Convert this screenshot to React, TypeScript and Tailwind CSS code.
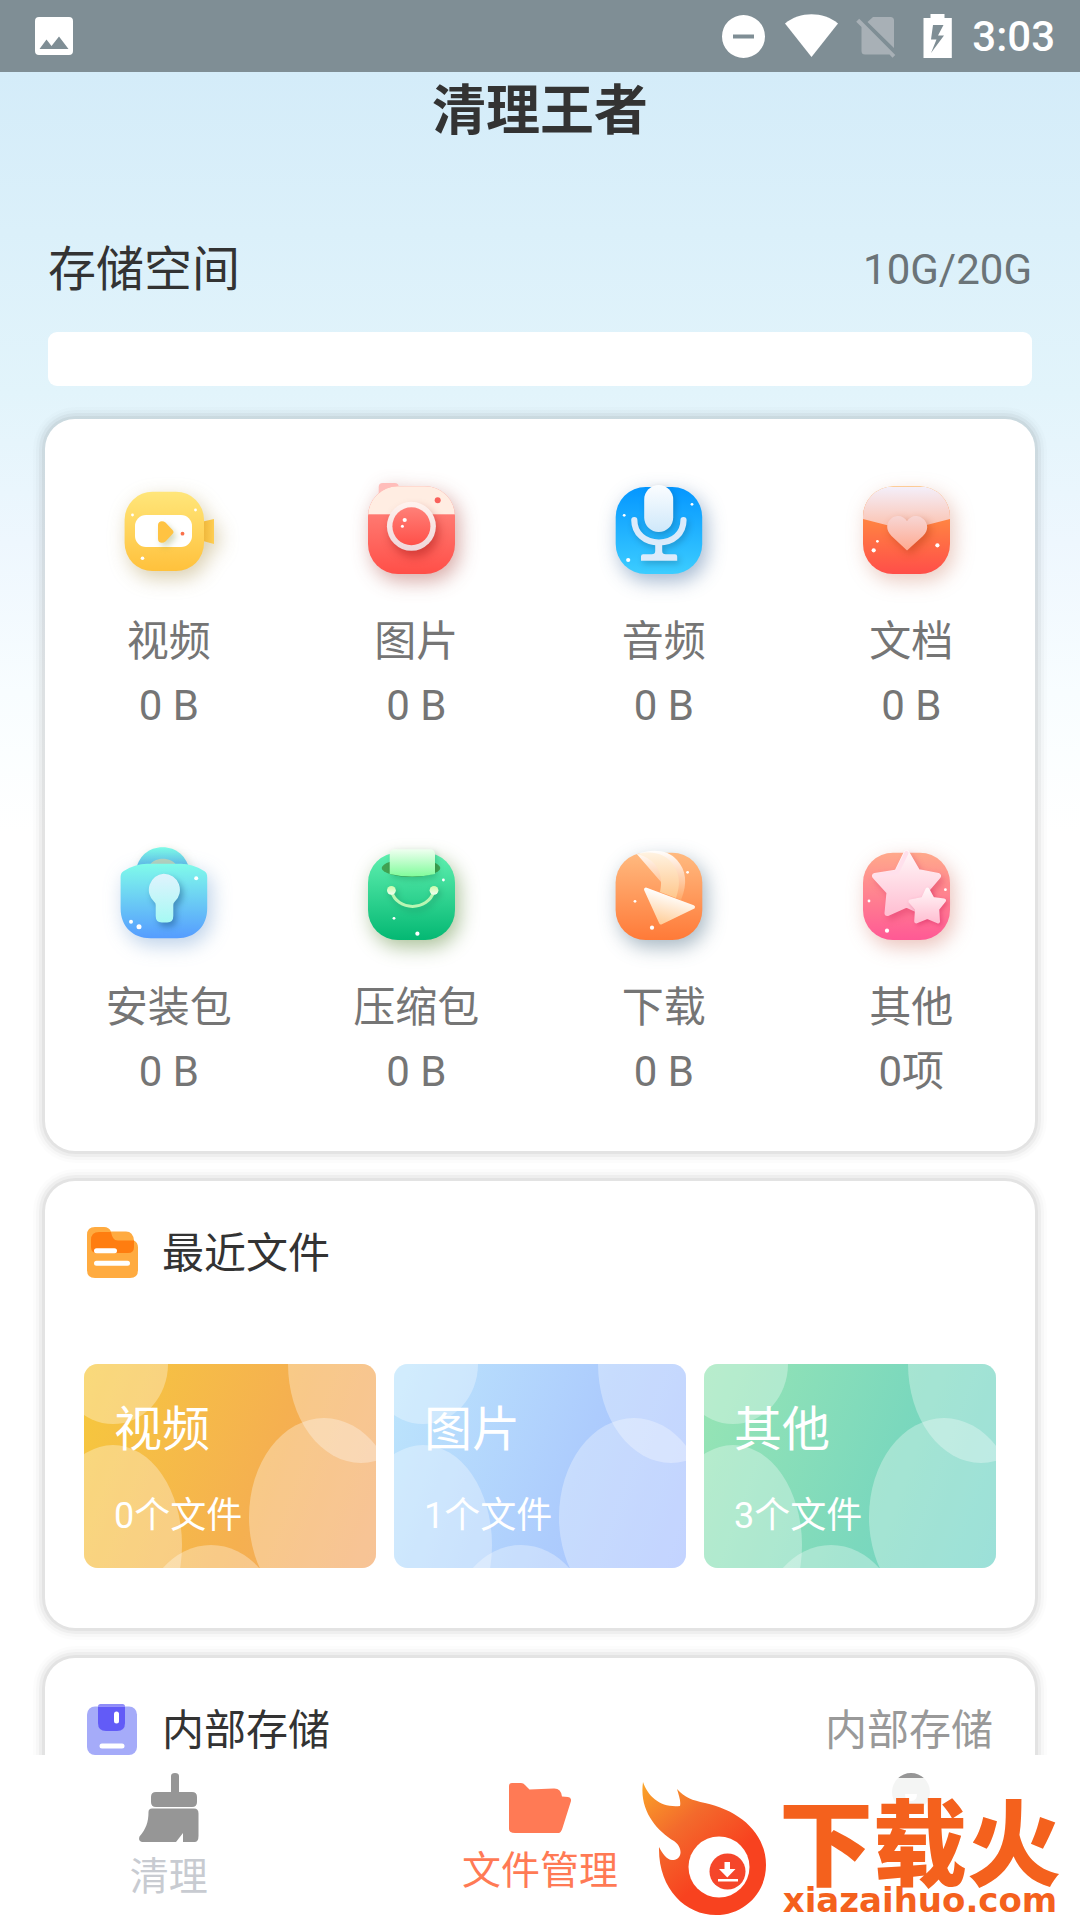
import type { ReactNode } from "react";

function Gradient({ id, from, to }: { id: string; from: string; to: string }) {
  return (
    <linearGradient id={id} x1="0" y1="0" x2="0" y2="1">
      <stop offset="0" stopColor={from} />
      <stop offset="1" stopColor={to} />
    </linearGradient>
  );
}

// small white sparkles scattered on every icon: [x, y, radius]
function Dots({ points }: { points: number[][] }) {
  return (
    <g fill="#fff">
      {points.map(([x, y, r]) => (
        <circle key={`${x}-${y}`} cx={x} cy={y} r={r} />
      ))}
    </g>
  );
}

const inner = "drop-shadow-[2px_3px_3px_rgba(0,0,0,0.18)]";

function VideoIcon() {
  return (
    <svg viewBox="0 0 120 120" className="size-[120px] overflow-visible" aria-hidden="true">
      <defs>
        <Gradient id="v-body" from="#ffe67a" to="#ffc13c" />
        <linearGradient id="v-side" x1="0" x2="1">
          <stop offset="0" stopColor="#eeb63b" />
          <stop offset="1" stopColor="#ffce52" />
        </linearGradient>
      </defs>
      <g className="drop-shadow-[4px_7px_10px_rgba(150,120,30,0.36)]">
        <path d="M94 51.5 105 49v25L94 71z" fill="url(#v-side)" />
        <rect x="15.6" y="21.7" width="79.4" height="79.4" rx="28" fill="url(#v-body)" />
      </g>
      <rect x="26" y="45" width="57" height="32" rx="11" fill="#fff" />
      <path
        className="drop-shadow-[3px_4px_3px_rgba(110,130,40,0.3)]"
        d="M49 55c0-4 4.5-5 7.5-2.5l7 7.5c1.3 1.4 1.3 2.6 0 4l-7 7.5c-3 2.5-7.5 1.5-7.5-2.5z"
        fill="#ffc342"
      />
      <circle cx="73.5" cy="63.7" r="1.9" fill="#f9704a" />
      <Dots points={[[23.5, 45, 1.4], [86.5, 40, 1.4], [33.5, 88.3, 1.8]]} />
    </svg>
  );
}

function CameraIcon() {
  return (
    <svg viewBox="0 0 120 120" className="size-[120px] overflow-visible" aria-hidden="true">
      <defs>
        <Gradient id="c-body" from="#ff8d84" to="#ff4f48" />
        <Gradient id="c-lens" from="#ff8078" to="#ff5049" />
        <Gradient id="c-ring" from="#fff3ee" to="#efd6da" />
        <clipPath id="c-clip">
          <rect x="12" y="16.3" width="87" height="87.7" rx="30" />
        </clipPath>
      </defs>
      <g className="drop-shadow-[4px_7px_10px_rgba(160,50,40,0.42)]">
        <path d="M22.7 30V17q0-4 4-4h12q4 0 4 4v10z" fill="#ffbdba" />
        <g clipPath="url(#c-clip)">
          <rect x="12" y="16" width="87" height="88" fill="url(#c-body)" />
          <rect x="12" y="16" width="87" height="28.3" fill="#ffede2" />
        </g>
      </g>
      <circle className="drop-shadow-[3px_6px_5px_rgba(150,10,10,0.4)]" cx="55.4" cy="56.3" r="24.5" fill="url(#c-ring)" />
      <circle cx="55.4" cy="56.3" r="19" fill="url(#c-lens)" />
      <circle cx="81.7" cy="30.3" r="3" fill="#f9605a" />
      <Dots points={[[48.7, 50, 2.1], [46.4, 56.3, 1.5]]} />
    </svg>
  );
}

function MicIcon() {
  return (
    <svg viewBox="0 0 120 120" className="size-[120px] overflow-visible" aria-hidden="true">
      <defs>
        <Gradient id="m-body" from="#0496ff" to="#3ccdff" />
        <Gradient id="m-cap" from="#fbfdff" to="#cfe8fa" />
      </defs>
      <rect className="drop-shadow-[4px_7px_10px_rgba(30,80,140,0.42)]" x="11.7" y="17" width="86.5" height="87" rx="30" fill="url(#m-body)" />
      <g className={inner} fill="#dcebfb">
        <path d="M30.300 50c0 13.500 10.500 22.500 24.700 22.500S79.500 63.500 79.500 50" fill="none" stroke="#dcebfb" strokeWidth="6.2" strokeLinecap="round" />
        <path d="M51.200 73h7v8q0 3.200 3.500 3.200h9.300q2.200 0 2.200 2.200v4.300H37v-4.300q0-2.200 2.200-2.200h8.500q3.500 0 3.500-3.200z" />
      </g>
      <rect className={inner} x="40.2" y="15" width="29" height="47" rx="14.5" fill="url(#m-cap)" />
      <Dots points={[[20.2, 45.3, 1.4], [88, 34.3, 1.4], [24.2, 90, 2.1]]} />
    </svg>
  );
}

function DocIcon() {
  return (
    <svg viewBox="0 0 120 120" className="size-[120px] overflow-visible" aria-hidden="true">
      <defs>
        <Gradient id="d-body" from="#ffa53e" to="#ff4e49" />
        <Gradient id="d-flap" from="#f4effa" to="#fcc0ac" />
        <Gradient id="d-heart" from="#f7d6d4" to="#ffa990" />
        <clipPath id="d-clip">
          <rect x="12" y="16.5" width="87" height="87.5" rx="30" />
        </clipPath>
      </defs>
      <g className="drop-shadow-[4px_7px_10px_rgba(190,90,60,0.32)]">
        <g clipPath="url(#d-clip)">
          <rect x="12" y="16" width="87" height="88" fill="url(#d-body)" />
          <path d="M12 17h87v32L62 58.500q-6.500 1.800-13 0L12 49z" fill="url(#d-flap)" />
        </g>
      </g>
      <path
        className="drop-shadow-[3px_4px_4px_rgba(170,50,10,0.4)]"
        d="M56 80.500 40.500 66C31 56.500 39 46 47 46c4 0 7 2 9 5.200C58 48 61 46 65 46c8 0 16.500 10.500 7 20z"
        fill="url(#d-heart)"
      />
      <Dots points={[[22.7, 80.3, 2.1], [26.4, 71.3, 1.4], [86.4, 75.3, 2.1]]} />
    </svg>
  );
}

function LockIcon() {
  return (
    <svg viewBox="0 0 120 120" className="size-[120px] overflow-visible" aria-hidden="true">
      <defs>
        <Gradient id="l-body" from="#80fbea" to="#559cff" />
        <Gradient id="l-top" from="#7cfbe6" to="#58a6ea" />
        <Gradient id="l-key" from="#e0f3fd" to="#a6f9f4" />
      </defs>
      <path className="drop-shadow-[2px_3px_5px_rgba(90,110,60,0.25)]" d="M26.500 36C29 20 40 11.300 53.600 11.300S78 20 81 36z" fill="url(#l-top)" />
      <path d="M40 30c3-5 8-7.300 13.800-7.300S65 25 68 30z" fill="#b7d3bd" />
      <path
        className="drop-shadow-[4px_7px_10px_rgba(60,120,190,0.34)]"
        d="M11.600 41q0-4 2.800-5.800Q26 27.700 38 27.700h34q12 0 23.500 7.500 2.700 1.800 2.700 5.800v31.300c0 18-12 30-30 30H41.600c-18 0-30-12-30-30z"
        fill="url(#l-body)"
      />
      <path
        className="drop-shadow-[3px_4px_3px_rgba(10,60,110,0.4)]"
        d="M54.700 37.700a16.200 16.200 0 0 1 10.800 28.300q-1.200 1.200-1.200 3V80q0 6.500-6 6.500h-5.600q-6 0-6-6.500V69q0-1.800-1.400-3a16.200 16.200 0 0 1 9.400-28.300z"
        fill="url(#l-key)"
      />
      <Dots points={[[87.2, 42.3, 2], [22, 85.7, 2], [30, 90.7, 2.5]]} />
    </svg>
  );
}

function BagIcon() {
  return (
    <svg viewBox="0 0 120 120" className="size-[120px] overflow-visible" aria-hidden="true">
      <defs>
        <Gradient id="b-body" from="#60f0b0" to="#04b873" />
        <Gradient id="b-paper" from="#effff0" to="#80fc9b" />
        <Gradient id="b-knob" from="#c8fba9" to="#f1fff0" />
      </defs>
      <rect className="drop-shadow-[4px_7px_10px_rgba(70,120,30,0.46)]" x="12" y="16.7" width="87" height="87.3" rx="30" fill="url(#b-body)" />
      <ellipse cx="55" cy="32" rx="29.3" ry="8.8" fill="#41a352" />
      <path className="drop-shadow-[2px_3px_3px_rgba(0,90,40,0.25)]" d="M33.700 18q0-4.700 5-4.700H74q5 0 5 4.700v20Q56 43 33.700 38z" fill="url(#b-paper)" />
      <g className={inner}>
        <path d="M35.400 55C41 75.500 72 75.500 78 55" fill="none" stroke="#b9f6b3" strokeWidth="3" />
        <circle cx="35.4" cy="54.3" r="4.4" fill="url(#b-knob)" />
        <circle cx="78" cy="54.3" r="4.4" fill="url(#b-knob)" />
      </g>
      <Dots points={[[87.4, 44, 1.4], [38, 82.3, 1.4], [61.4, 97.7, 2.1]]} />
    </svg>
  );
}

function DownloadIcon() {
  return (
    <svg viewBox="0 0 120 120" className="size-[120px] overflow-visible" aria-hidden="true">
      <defs>
        <Gradient id="dl-body" from="#ffba80" to="#ff7a38" />
        <Gradient id="dl-swoosh" from="#fff3e2" to="#ffc78c" />
        <Gradient id="dl-edge" from="#ffffff" to="#ffa968" />
        <linearGradient id="dl-arrow" x1="0.6" y1="0.15" x2="0.3" y2="1">
          <stop offset="0" stopColor="#fff" />
          <stop offset="1" stopColor="#ffcf9c" />
        </linearGradient>
      </defs>
      <rect className="drop-shadow-[4px_7px_10px_rgba(40,80,110,0.42)]" x="11.6" y="16.7" width="86.7" height="87.3" rx="30" fill="url(#dl-body)" />
      <path d="M33 18.300C48 12 65 14 73 24c9 10 11 23 4 40L70 61z" fill="url(#dl-edge)" />
      <path d="M33 18.300C46 14 61 17 68 27c9 12 8 23 4 35l-16-6c4-16-2-33-23-37.700z" fill="url(#dl-swoosh)" />
      <path
        d="m42 53.500 47 17.500-32 15.500z"
        fill="url(#dl-arrow)"
        stroke="url(#dl-arrow)"
        strokeWidth="4"
        strokeLinejoin="round"
      />
      <Dots points={[[31, 65.3, 1.4], [83.6, 36.3, 1.4], [48, 91.7, 2.1]]} />
    </svg>
  );
}

function StarIcon() {
  return (
    <svg viewBox="0 0 120 120" className="size-[120px] overflow-visible" aria-hidden="true">
      <defs>
        <Gradient id="s-body" from="#ffa98b" to="#ff5995" />
        <Gradient id="s-star" from="#fff5f7" to="#ffc0d3" />
      </defs>
      <rect className="drop-shadow-[4px_7px_10px_rgba(200,90,70,0.36)]" x="12" y="16.7" width="87" height="87.3" rx="30" fill="url(#s-body)" />
      <path
        className="drop-shadow-[3px_4px_3px_rgba(200,20,80,0.3)]"
        d="M55.500 17 46 36.500 24 40l14.500 16L36.500 77l19-8.500L74 77l1.500-23.500L87 40l-20.500-4z"
        fill="url(#s-star)"
        stroke="url(#s-star)"
        strokeWidth="6"
        strokeLinejoin="round"
      />
      <path d="M55.500 17 46 36.500 24 40" fill="none" stroke="#ffe0ec" strokeWidth="4" strokeLinecap="round" />
      <path
        className="drop-shadow-[2px_2px_2px_rgba(200,20,80,0.35)]"
        d="m76.400 53.500-4.400 9.500-12.500 2.500 6.500 7.500-.8 12.500 11.200-4.500 10.600 4.500-.8-12.500 6.800-8.500-11.400-1.500z"
        fill="url(#s-star)"
        stroke="url(#s-star)"
        strokeWidth="4"
        strokeLinejoin="round"
      />
      <Dots points={[[18, 65, 1.4], [94.4, 53.7, 1.4], [36, 94.7, 2.1]]} />
    </svg>
  );
}

const categories: { name: string; size: string; icon: ReactNode }[] = [
  { name: "视频", size: "0 B", icon: <VideoIcon /> },
  { name: "图片", size: "0 B", icon: <CameraIcon /> },
  { name: "音频", size: "0 B", icon: <MicIcon /> },
  { name: "文档", size: "0 B", icon: <DocIcon /> },
  { name: "安装包", size: "0 B", icon: <LockIcon /> },
  { name: "压缩包", size: "0 B", icon: <BagIcon /> },
  { name: "下载", size: "0 B", icon: <DownloadIcon /> },
  { name: "其他", size: "0项", icon: <StarIcon /> },
];

const recentFiles = [
  { name: "视频", count: "0个文件", bg: "bg-linear-110 from-[#f6c83c] via-[#f5b050] via-60% to-[#f4a766]" },
  { name: "图片", count: "1个文件", bg: "bg-linear-110 from-[#bce5fc] via-[#adccfd] via-60% to-[#a7bfff]" },
  { name: "其他", count: "3个文件", bg: "bg-linear-110 from-[#97e5b4] via-[#7bd8bd] via-60% to-[#6dd2c7]" },
];

const card =
  "rounded-[30px] bg-white shadow-[0_0_0_3px_rgba(0,0,0,0.045),0_0_0_6px_rgba(0,0,0,0.035),0_0_0_9px_rgba(0,0,0,0.02),0_0_0_12px_rgba(0,0,0,0.01)]";

function StatusBar() {
  return (
    <header className="flex h-[72px] shrink-0 items-center justify-between bg-[#7f8e95] pr-[25px] pl-[35px] text-white">
      <svg viewBox="0 0 38 38" className="size-[38px]" aria-hidden="true">
        <path fillRule="evenodd" fill="#fff" d="M4 0h30q4 0 4 4v30q0 4-4 4H4q-4 0-4-4V4q0-4 4-4zm.500 32h29L24 19.500l-7.500 9.500-5-6.500z" />
      </svg>
      <div className="flex items-center">
        <svg viewBox="0 0 240 48" className="h-12 w-[240px]" aria-hidden="true">
          <path fillRule="evenodd" fill="#fff" d="M21.500 3a21.500 21.500 0 1 0 0 43 21.500 21.500 0 0 0 0-43zM11 22.500h21v4H11z" />
          <path fill="#fff" d="M63 11.500C78-.700 101-.700 116 11.500L89.500 45z" />
          <path fill="#a8b0b6" d="M151 5h17.500q3.500 0 3.500 3.500V36l-26.500-26zM140 9.500l-2.800-2.800-3 3 5.300 5.300v24q0 3.500 3.500 3.500h24.500l3 3.200 2.800-2.800z" />
          <path fillRule="evenodd" fill="#fff" d="M208.500 2h14v4h7.300v40h-28.300V6h7zM211 13l-2 14.500h5.500L209 41l13-17.500h-6L221.500 13z" />
        </svg>
        <span className="pt-[2px] pl-[10px] text-[42px] leading-[70px] font-medium">3:03</span>
      </div>
    </header>
  );
}

function RecentTile({ name, count, bg }: (typeof recentFiles)[number]) {
  return (
    <button type="button" className={`relative flex h-[204px] flex-1 flex-col overflow-hidden rounded-[14px] px-[30px] pt-[34px] text-left text-white ${bg}`}>
      <svg viewBox="0 0 292 204" preserveAspectRatio="none" className="absolute inset-0 size-full" fill="#fff" fillOpacity="0.32" aria-hidden="true">
        <ellipse cx="29" cy="0" rx="55" ry="60" />
        <ellipse cx="29" cy="181" rx="69" ry="100" />
        <ellipse cx="127" cy="262" rx="69" ry="81" />
        <ellipse cx="240" cy="153" rx="75" ry="99" />
        <ellipse cx="277" cy="0" rx="73" ry="99" />
      </svg>
      <span className="relative text-[48px] leading-[64px]">{name}</span>
      <span className="relative pt-[22px] text-[36px] leading-[64px]">{count}</span>
    </button>
  );
}

function TabBar() {
  return (
    <nav className="grid h-[165px] shrink-0 grid-cols-[1fr_1.2fr_1fr] bg-white pt-[18px] text-[39px] leading-[60px]">
      <button type="button" className="flex flex-col items-center text-[#c8cbd1]">
        <svg viewBox="0 0 60 70" className="h-[70px] w-[60px]" fill="#969696" aria-hidden="true">
          <path d="M32 3q0-3 4-3t4 3v16h13q5 0 5 5v5q0 5-5 5H17q-5 0-5-5v-5q0-5 5-5h15z" />
          <path d="M13 35.500h42q4.500 0 4.500 5V63q0 6-4 6H44V60l-7 9H3q-4-1-2.500-5.500C7 56 9.500 49 9.500 39q0-3.500 3.500-3.500z" />
        </svg>
        <span className="pt-1">清理</span>
      </button>
      <button type="button" className="flex flex-col items-center pt-[10px] text-[#ff7a55]">
        <svg viewBox="0 0 62 50" className="h-[50px] w-[62px]" fill="#ff7a55" aria-hidden="true">
          <path d="M3 0h9q2.500 0 4 2l4.500 4.500 24-1Q52 5 53 13.500l6 .500q3.500.500 3 4L53.500 45q-1.500 5-4 5H6q-6 0-6-4V3q0-3 3-3z" />
        </svg>
        <span className="pt-2">文件管理</span>
      </button>
      <button type="button" className="flex flex-col items-center">
        <svg viewBox="0 0 60 70" className="h-[70px] w-[60px]" fill="#969696" aria-hidden="true">
          <path fillRule="evenodd" d="M30 0a19 19 0 1 1 0 38 19 19 0 0 1 0-38zM24 21q0 7 6 7t6-7z" />
        </svg>
      </button>
    </nav>
  );
}

function Watermark() {
  return (
    <div className="absolute right-0 bottom-0 flex h-[142px] w-[442px] bg-white/90 text-[#f4611d]">
      <svg viewBox="0 0 150 150" className="-mt-2 size-[150px] shrink-0" aria-hidden="true">
        <defs>
          <linearGradient id="w-flame" x1="0" y1="0" x2="0.55" y2="0.7">
            <stop offset="0" stopColor="#fba528" />
            <stop offset="0.5" stopColor="#f36a2c" />
            <stop offset="1" stopColor="#f8421f" />
          </linearGradient>
        </defs>
        <path
          d="M5 12c5 15 18 26 37 24 1-5-1-10-3-17 8 9 15 11 28 14 33 7 61 29 61 62 0 29-23 50-50 50-31 0-58-27-57-68 3 6 8 13 13 13 11 0 11-13 2-19C18 60 1 40 5 12z"
          fill="url(#w-flame)"
        />
        <circle cx="81" cy="97" r="30.5" fill="#fff" />
        <circle cx="89.5" cy="101.5" r="18" fill="#f5462a" />
        <path d="M86.500 92h5.500v7h5.500l-8.200 8.500-8.300-8.500h5.500zM80 109h20v2.500H80z" fill="#fff" />
      </svg>
      <div className="-ml-5 flex flex-1 flex-col items-center pt-[22px] pr-2">
        <span className="text-[94px] leading-[94px] font-black">下载火</span>
        <span className="-mt-[14px] font-['DejaVu_Sans',sans-serif] text-[34px] leading-[40px] font-bold">xiazaihuo.com</span>
      </div>
    </div>
  );
}

export default function App() {
  return (
    <div className="relative flex h-screen flex-col overflow-hidden bg-white font-[Roboto,'Noto_Sans_CJK_SC',sans-serif] text-[#333]">
      <StatusBar />
      <main className="min-h-0 flex-1 overflow-hidden bg-[linear-gradient(#d4ecf9_0,#e2f4fb_320px,#eef7fe_470px,#f8fdff_620px,#fff_760px)]">
        <h1 className="text-center text-[54px] leading-[80px] font-bold">清理王者</h1>
        <section className="px-12 pt-[84px]">
          <div className="flex items-center justify-between leading-[68px]">
            <h2 className="text-[48px]">存储空间</h2>
            <span className="text-[42px] text-[#6b7478]">10G/20G</span>
          </div>
          <div className="mt-7 h-[54px] rounded-[9px] bg-white" />
        </section>

        <div className="flex flex-col gap-[30px] px-[45px] pt-[33px]">
          <section className={`grid grid-cols-4 ${card}`}>
            {categories.map((item) => (
              <button
                key={item.name}
                type="button"
                className="flex flex-col items-center pt-[51px] pb-[47px] text-[42px] leading-[64px] text-[#757575]"
              >
                {item.icon}
                <span className="pt-5">{item.name}</span>
                <span>{item.size}</span>
              </button>
            ))}
          </section>

          <section className={`px-[39px] pt-[37px] pb-[60px] ${card}`}>
            <div className="flex items-center gap-6 pl-[3px]">
              <svg viewBox="0 0 51 51" className="size-[51px]" aria-hidden="true">
                <path d="M8 0h9q5 0 7 4.500h15q7 0 8 9 4 2 4 7V43q0 8-8 8H8q-8 0-8-8V8q0-8 8-8z" fill="#ffab40" />
                <path d="M12 5h12c1 5 3 8.500 7 8.500h16V20q0 6-6 6H10q-6 0-6-6v-7q0-8 8-8z" fill="#ff7d10" />
                <path d="M9.500 23.700h18M9.500 36.200h31" stroke="#fff" strokeWidth="5" strokeLinecap="round" />
              </svg>
              <h2 className="pt-1 text-[42px] leading-[64px]">最近文件</h2>
            </div>
            <div className="flex gap-[18px] pt-[78px]">
              {recentFiles.map((item) => (
                <RecentTile key={item.name} {...item} />
              ))}
            </div>
          </section>

          <section className={`px-[42px] pt-[37px] pb-[60px] ${card}`}>
            <div className="flex items-center gap-6 text-[42px] leading-[64px]">
              <svg viewBox="0 0 51 51" className="size-[51px]" aria-hidden="true">
                <rect x="0" y="2.5" width="50" height="48.5" rx="8" fill="#a5abf9" />
                <path d="M11 2.500h27V19q0 8-8 8H19q-8 0-8-8z" fill="#625bf7" />
                <path d="M11 2.500q0-2.500 2.500-2.500h22Q38 0 38 2.500z" fill="#8f8cf8" />
                <path d="M29.500 10v7" stroke="#fff" strokeWidth="5" strokeLinecap="round" />
                <path d="M15 42h20" stroke="#fff" strokeWidth="5" strokeLinecap="round" />
              </svg>
              <h2 className="flex-1 pt-1">内部存储</h2>
              <span className="pt-1 text-[#999]">内部存储</span>
            </div>
          </section>
        </div>
      </main>
      <TabBar />
      <Watermark />
    </div>
  );
}
